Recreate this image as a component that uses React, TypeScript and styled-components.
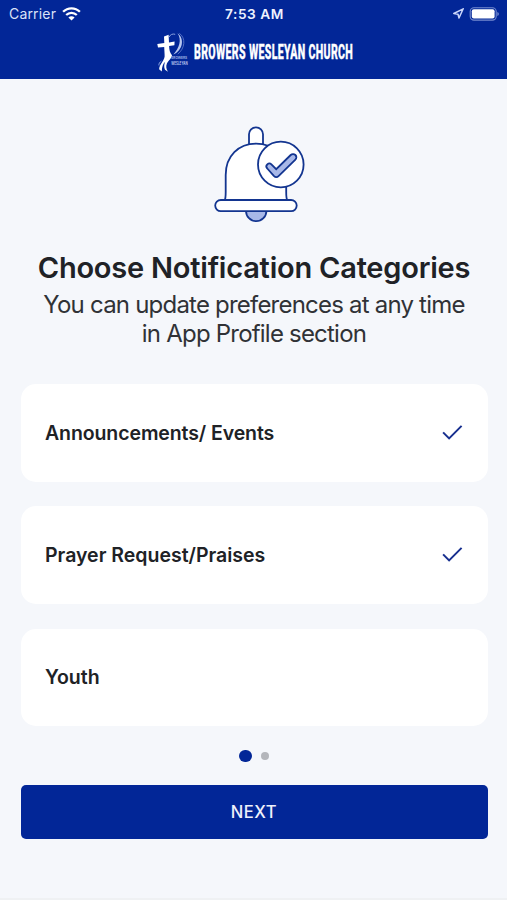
import React from 'react';
import styled, { createGlobalStyle } from 'styled-components';

const BLUE = '#022697';

const GlobalStyle = createGlobalStyle`
  * { box-sizing: border-box; }
  body { margin: 0; background: #f5f7fb; font-family: Inter, "Liberation Sans", sans-serif; }
`;

const Screen = styled.div`
  height: 900px;
  display: flex;
  flex-direction: column;
  align-items: stretch;
  overflow: hidden;
  background: #f5f7fb;
  border-bottom: 2px solid #eff1f3;
`;

const Header = styled.header`
  height: 79px;
  flex: none;
  background: ${BLUE};
  color: #fff;
`;

const StatusBar = styled.div`
  height: 28px;
  padding: 0 7px 0 9px;
  display: grid;
  grid-template-columns: 1fr auto 1fr;
  align-items: center;
`;

const StatusGroup = styled.div<{ $end?: boolean }>`
  display: flex;
  align-items: center;
  gap: ${p => (p.$end ? 5 : 6)}px;
  justify-content: ${p => (p.$end ? 'flex-end' : 'flex-start')};
`;

const Carrier = styled.span`
  font-size: 14px;
  line-height: 16px;
  letter-spacing: 0.18px;
  color: #dbe2f7;
`;

const Clock = styled.span`
  font-size: 13.7px;
  line-height: 16px;
  font-weight: 600;
  letter-spacing: 0.55px;
  color: #eef2ff;
`;

const Brand = styled.div`
  height: 48px;
  padding-left: 154px;
  display: flex;
  align-items: center;
`;

const BrandName = styled.span`
  margin: 2px 0 0 2px;
  font-family: Roboto, sans-serif;
  font-size: 19.5px;
  font-weight: 800;
  line-height: 20px;
  letter-spacing: 0.6px;
  white-space: nowrap;
  -webkit-text-stroke: 0.4px #fff;
  transform: scaleX(0.544);
  transform-origin: left center;
`;

const Main = styled.main`
  padding: 46px 19.5px 0 20.5px;
  display: flex;
  flex-direction: column;
  align-items: center;
`;

const Title = styled.h1`
  margin: 27px 0 0;
  font-size: 29px;
  line-height: 36px;
  font-weight: 600;
  letter-spacing: -0.22px;
  white-space: nowrap;
  color: #202226;
`;

const Subtitle = styled.p`
  margin: 4px 0 0;
  font-size: 24px;
  line-height: 29px;
  letter-spacing: -0.79px;
  text-align: center;
  white-space: nowrap;
  color: #303236;
`;

const Options = styled.div`
  margin-top: 36.4px;
  width: 100%;
  display: grid;
  grid-auto-rows: 97.3px;
  gap: 24.8px;
`;

const Option = styled.div`
  padding: 0 24.5px 0 24.5px;
  display: flex;
  align-items: center;
  justify-content: space-between;
  border-radius: 15px;
  background: #fff;
`;

const OptionLabel = styled.span<{ $tracking: number }>`
  font-size: 19.5px;
  font-weight: 600;
  letter-spacing: ${p => p.$tracking}px;
  color: #202226;
`;

const Pager = styled.div`
  margin-top: 23.6px;
  height: 13px;
  display: flex;
  align-items: center;
  gap: 9px;
`;

const Dot = styled.span<{ $active?: boolean }>`
  width: ${p => (p.$active ? 12.6 : 8)}px;
  height: ${p => (p.$active ? 12.6 : 8)}px;
  border-radius: 50%;
  background: ${p => (p.$active ? BLUE : '#b4b6bb')};
`;

const NextButton = styled.button`
  margin-top: 22.6px;
  width: 100%;
  height: 54px;
  border: 0;
  border-radius: 5px;
  background: ${BLUE};
  color: #eef1fb;
  font: 550 16.6px Inter, sans-serif;
  letter-spacing: 0.5px;
`;

const Wifi = () => (
  <svg width="19" height="15" viewBox="0 0 19 15" fill="none" stroke="#fff" strokeWidth="2.3">
    <path d="M1.1 4.8C5.8 .1 13.2 .1 17.9 4.8" />
    <path d="M4.2 8C7.2 5.1 11.8 5.1 14.8 8" />
    <path d="M9.5 13.6L6.4 10.4C8.1 8.8 10.9 8.8 12.6 10.4Z" fill="#fff" stroke="none" />
  </svg>
);

const LocationArrow = () => (
  <svg width="12" height="12" viewBox="0 0 12 12" fill="none" stroke="#cbd6fa" strokeWidth="1.5" strokeLinejoin="round">
    <path d="M11.2 .8L1.8 5.5L6 6.2L7 10Z" />
  </svg>
);

const Battery = () => (
  <svg width="31" height="15" viewBox="0 0 31 15">
    <rect x="1.2" y=".7" width="26" height="12.4" rx="3.8" fill="none" stroke="#758bd0" strokeWidth="1.1" />
    <rect x="2.8" y="2.3" width="22.8" height="9.2" rx="2" fill="#fff" />
    <path d="M28.3 4.9C30.4 5.7 30.4 8.2 28.3 9Z" fill="#758bd0" />
  </svg>
);

const ChurchMark = () => (
  <svg width="38" height="46" viewBox="0 0 38 46" fill="none" overflow="visible">
    <path d="M10 7.4L14.6 5.8L15 13.5L20.6 12.5L20.4 16.2L15.1 16.9C15.3 20.6 15.8 23.8 18 26.2C17.5 29.7 14.5 31.2 13 34.2C11.7 37 12.2 40 14 42.8L11 40.8C9.8 38 10 35.4 11.2 32.8C8.8 34.8 8 38 7.8 42.4L5.1 40.2C5.4 34.7 11.4 31.5 10.6 25.5L10.2 17.9L4 18.5L3.3 14.9L10.3 14Z" fill="#fff" />
    <path d="M23.5 4.2C31 9.5 28.8 21.5 19.4 25.4C25 19.5 28.2 10.5 23.5 4.2Z" fill="#b9c7ef" />
    <path d="M25.3 4.3C32.2 9 30.9 19.6 23.8 25.1" stroke="#6781cf" strokeWidth=".8" />
    <path d="M15.2 8C16.3 5.5 18.5 4.5 21.2 5.3M5 36.5C4.5 34.8 5.7 33.2 7.4 32.1" stroke="#8ca2df" strokeWidth="1" />
    <text x="17.2" y="29.8" fill="#a4b6e8" fontFamily="Inter, sans-serif" fontSize="3.8" fontWeight="600" textLength="16" lengthAdjust="spacingAndGlyphs">BROWERS</text>
    <text x="17.2" y="35.8" fill="#c8d4f5" fontFamily="Inter, sans-serif" fontSize="4.6" fontWeight="600" textLength="16.5" lengthAdjust="spacingAndGlyphs">WESLEYAN</text>
  </svg>
);

const Bell = () => (
  <svg width="91" height="98" viewBox="-5 0 91 98" overflow="visible" fill="#fff" stroke="#133590" strokeWidth="1.8">
    <path d="M35 22V9.3a7 7 0 0 1 14 0V22" />
    <path d="M10.6 75.3C11.6 74 11.7 71 11.7 67V50C11.7 31 24.6 18.7 42 18.7S72.2 31 72.2 50V67C72.2 71 72.3 74 73.4 75.3Z" />
    <path d="M32 86a10.2 10.2 0 0 0 20.4 0" fill="#a8b8e8" />
    <rect x="1.2" y="75" width="81.5" height="11.2" rx="5.6" />
    <circle cx="66.8" cy="39.5" r="22.8" />
    <path d="M53.3 39.4a2.9 2.9 0 0 1 4.1 0L62.2 44.2L76.7 30a3.3 3.3 0 0 1 4.7 4.7L64.8 50.9a3.6 3.6 0 0 1-5 0L53.3 43.5a2.9 2.9 0 0 1 0-4.1Z" fill="#a8b8e8" />
  </svg>
);

const CheckIcon = () => (
  <svg width="21" height="17" viewBox="0 0 21 17" fill="none" stroke="#172f8f" strokeWidth="2">
    <path d="M1.1 7.4L7.1 13.4L19.6 .9" />
  </svg>
);

const categories = [
  { name: 'Announcements/ Events', selected: true, tracking: -0.1 },
  { name: 'Prayer Request/Praises', selected: true, tracking: 0 },
  { name: 'Youth', selected: false, tracking: 0 },
];

export default function App() {
  return (
    <>
      <GlobalStyle />
      <Screen>
        <Header>
          <StatusBar>
            <StatusGroup><Carrier>Carrier</Carrier><Wifi /></StatusGroup>
            <Clock>7:53 AM</Clock>
            <StatusGroup $end><LocationArrow /><Battery /></StatusGroup>
          </StatusBar>
          <Brand><ChurchMark /><BrandName>BROWERS WESLEYAN CHURCH</BrandName></Brand>
        </Header>
        <Main>
          <Bell />
          <Title>Choose Notification Categories</Title>
          <Subtitle>You can update preferences at any time<br />in App Profile section</Subtitle>
          <Options>
            {categories.map(c => (
              <Option key={c.name}>
                <OptionLabel $tracking={c.tracking}>{c.name}</OptionLabel>
                {c.selected && <CheckIcon />}
              </Option>
            ))}
          </Options>
          <Pager><Dot $active /><Dot /></Pager>
          <NextButton>NEXT</NextButton>
        </Main>
      </Screen>
    </>
  );
}
